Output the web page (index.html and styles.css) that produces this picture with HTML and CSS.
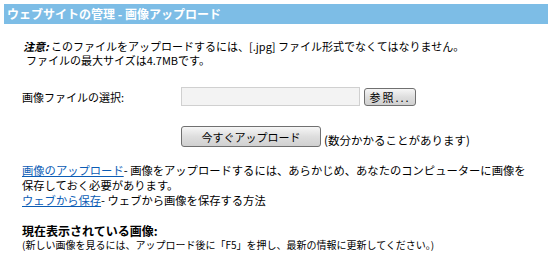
FILE: index.html
```html
<!DOCTYPE html>
<html lang="ja">
<head>
  <meta charset="UTF-8">
  <title>ウェブサイトの管理 - 画像アップロード</title>
  <link rel="stylesheet" href="styles.css">
</head>
<body>

<div class="title-bar">ウェブサイトの管理 - 画像アップロード</div>

<div class="notice">
  <p><b><i>注意:</i></b> このファイルをアップロードするには、[.jpg] ファイル形式でなくてはなりません。</p>
  <p class="indent">ファイルの最大サイズは4.7MBです。</p>
</div>

<div class="file-row">
  <span class="label">画像ファイルの選択:</span>
  <span class="file-input"></span>
  <button class="btn btn-browse" type="button">参照...</button>
</div>

<div class="upload-row">
  <button class="btn btn-upload" type="button">今すぐアップロード</button>
  <span class="hint">(数分かかることがあります)</span>
</div>

<div class="help">
  <p><a href="#">画像のアップロード</a>- 画像をアップロードするには、あらかじめ、あなたのコンピューターに画像を<br>保存しておく必要があります。</p>
  <p><a href="#">ウェブから保存</a>- ウェブから画像を保存する方法</p>
</div>

<div class="current">
  <h3>現在表示されている画像:</h3>
  <p>(新しい画像を見るには、アップロード後に「F5」を押し、最新の情報に更新してください。)</p>
</div>

</body>
</html>
```

FILE: styles.css
```css
body {
  margin: 4px 1px 0 4px;
  font-family: "Noto Sans CJK JP", "DejaVu Sans", sans-serif;
  font-size: 11px;
  color: #000;
}

p {
  margin: 0;
}

.title-bar {
  background-color: #7dbde6;
  color: #fff;
  font-weight: bold;
  font-size: 12px;
  height: 20px;
  line-height: 20px;
  padding-left: 3px;
}

.notice {
  margin: 15px 0 0 19px;
  line-height: 14px;
}

.notice .indent {
  padding-left: 3px;
}

.file-row {
  display: flex;
  align-items: center;
  margin-top: 20px;
  padding-left: 18px;
}

.label {
  width: 159px;
}

.file-input {
  width: 177px;
  height: 17px;
  border: 1px solid #d0d0d0;
  background-color: #f3f3f3;
}

.btn {
  font-family: inherit;
  font-size: 11px;
  color: #000;
  border: 1px solid #707070;
  border-radius: 3px;
  background: linear-gradient(#f6f6f6, #dedede 50%, #d0d0d0);
  padding: 0;
}

.btn-browse {
  width: 52px;
  height: 18px;
  margin-left: 4px;
  letter-spacing: 2px;
}

.upload-row {
  display: flex;
  align-items: flex-end;
  margin-top: 20px;
  padding-left: 177px;
}

.btn-upload {
  width: 140px;
  height: 21px;
}

.hint {
  margin-left: 3px;
  font-size: 11.5px;
  line-height: 14px;
}

.help {
  margin: 16px 0 0 18px;
  font-size: 11.3px;
  line-height: 15px;
  white-space: nowrap;
}

.help a {
  color: #0b5cb5;
}

.current {
  margin: 16px 0 0 18px;
}

.current h3 {
  margin: 0;
  font-size: 12px;
  line-height: 14px;
}

.current p {
  font-size: 10px;
  line-height: 14px;
}
```
